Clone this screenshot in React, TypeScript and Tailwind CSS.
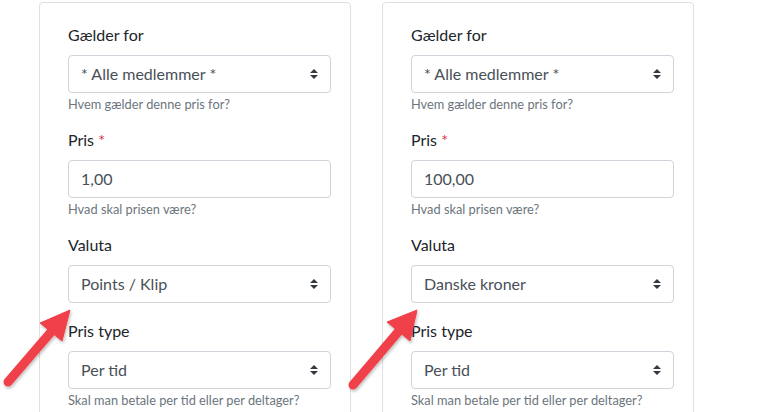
import React from "react";

const FONT = { fontFamily: 'Lato, "Open Sans", sans-serif' };

function Caret() {
  return (
    <svg width="8" height="10" viewBox="0 0 4 5" className="absolute right-[12px] top-1/2 -translate-y-1/2">
      <path d="M2 0L0 2h4zm0 5L0 3h4z" fill="#343a40" />
    </svg>
  );
}

function Field({
  label,
  required,
  value,
  select,
  help,
}: {
  label: string;
  required?: boolean;
  value: string;
  select?: boolean;
  help?: string;
}) {
  return (
    <div className="mb-4">
      <div className="text-[16px] leading-[24px] text-[#212529] mb-2">
        {label}
        {required && <span className="text-[#dc3545]"> *</span>}
      </div>
      <div className="relative h-[38px] border border-[#ced4da] rounded-[4px] px-3 flex items-center text-[16px] text-[#495057] bg-white">
        {value}
        {select && <Caret />}
      </div>
      {help && <div className="mt-1 text-[12.8px] leading-[15px] text-[#6c757d]">{help}</div>}
    </div>
  );
}

function Card({ price, currency }: { price: string; currency: string }) {
  return (
    <div className="w-[312px] shrink-0 border border-[#dfdfdf] rounded-[4px] pt-[20px] pl-[28px] pr-[19px] h-[430px]">
      <Field label="Gælder for" value="* Alle medlemmer *" select help="Hvem gælder denne pris for?" />
      <Field label="Pris" required value={price} help="Hvad skal prisen være?" />
      <Field label="Valuta" value={currency} select />
      <Field label="Pris type" value="Per tid" select help="Skal man betale per tid eller per deltager?" />
    </div>
  );
}

function Arrow({ tail, tip, l, r }: { tail: [number, number]; tip: [number, number]; l: [number, number]; r: [number, number] }) {
  const mx = (l[0] + r[0]) / 2;
  const my = (l[1] + r[1]) / 2;
  return (
    <g>
      <line x1={tail[0]} y1={tail[1]} x2={mx} y2={my} stroke="#f04048" strokeWidth="9" strokeLinecap="round" />
      <polygon points={`${tip[0]},${tip[1]} ${l[0]},${l[1]} ${r[0]},${r[1]}`} fill="#f04048" stroke="#f04048" strokeWidth="1" strokeLinejoin="round" />
    </g>
  );
}

export default function App() {
  return (
    <div className="relative w-[773px] h-[412px] overflow-hidden bg-white" style={FONT}>
      <div className="flex pl-[39px] gap-[31px] pt-[2px]">
        <Card price="1,00" currency="Points / Klip" />
        <Card price="100,00" currency="Danske kroner" />
      </div>
      <svg className="absolute inset-0 pointer-events-none" width="773" height="412">
        <defs>
          <filter id="sh" x="-20%" y="-20%" width="140%" height="140%">
            <feDropShadow dx="1" dy="2" stdDeviation="1.5" floodColor="#000" floodOpacity="0.25" />
          </filter>
        </defs>
        <g filter="url(#sh)">
          <Arrow tail={[8, 382]} tip={[70, 310]} l={[40, 323]} r={[62, 341]} />
          <Arrow tail={[353, 385]} tip={[417, 310]} l={[387, 322]} r={[410, 341]} />
        </g>
      </svg>
    </div>
  );
}
